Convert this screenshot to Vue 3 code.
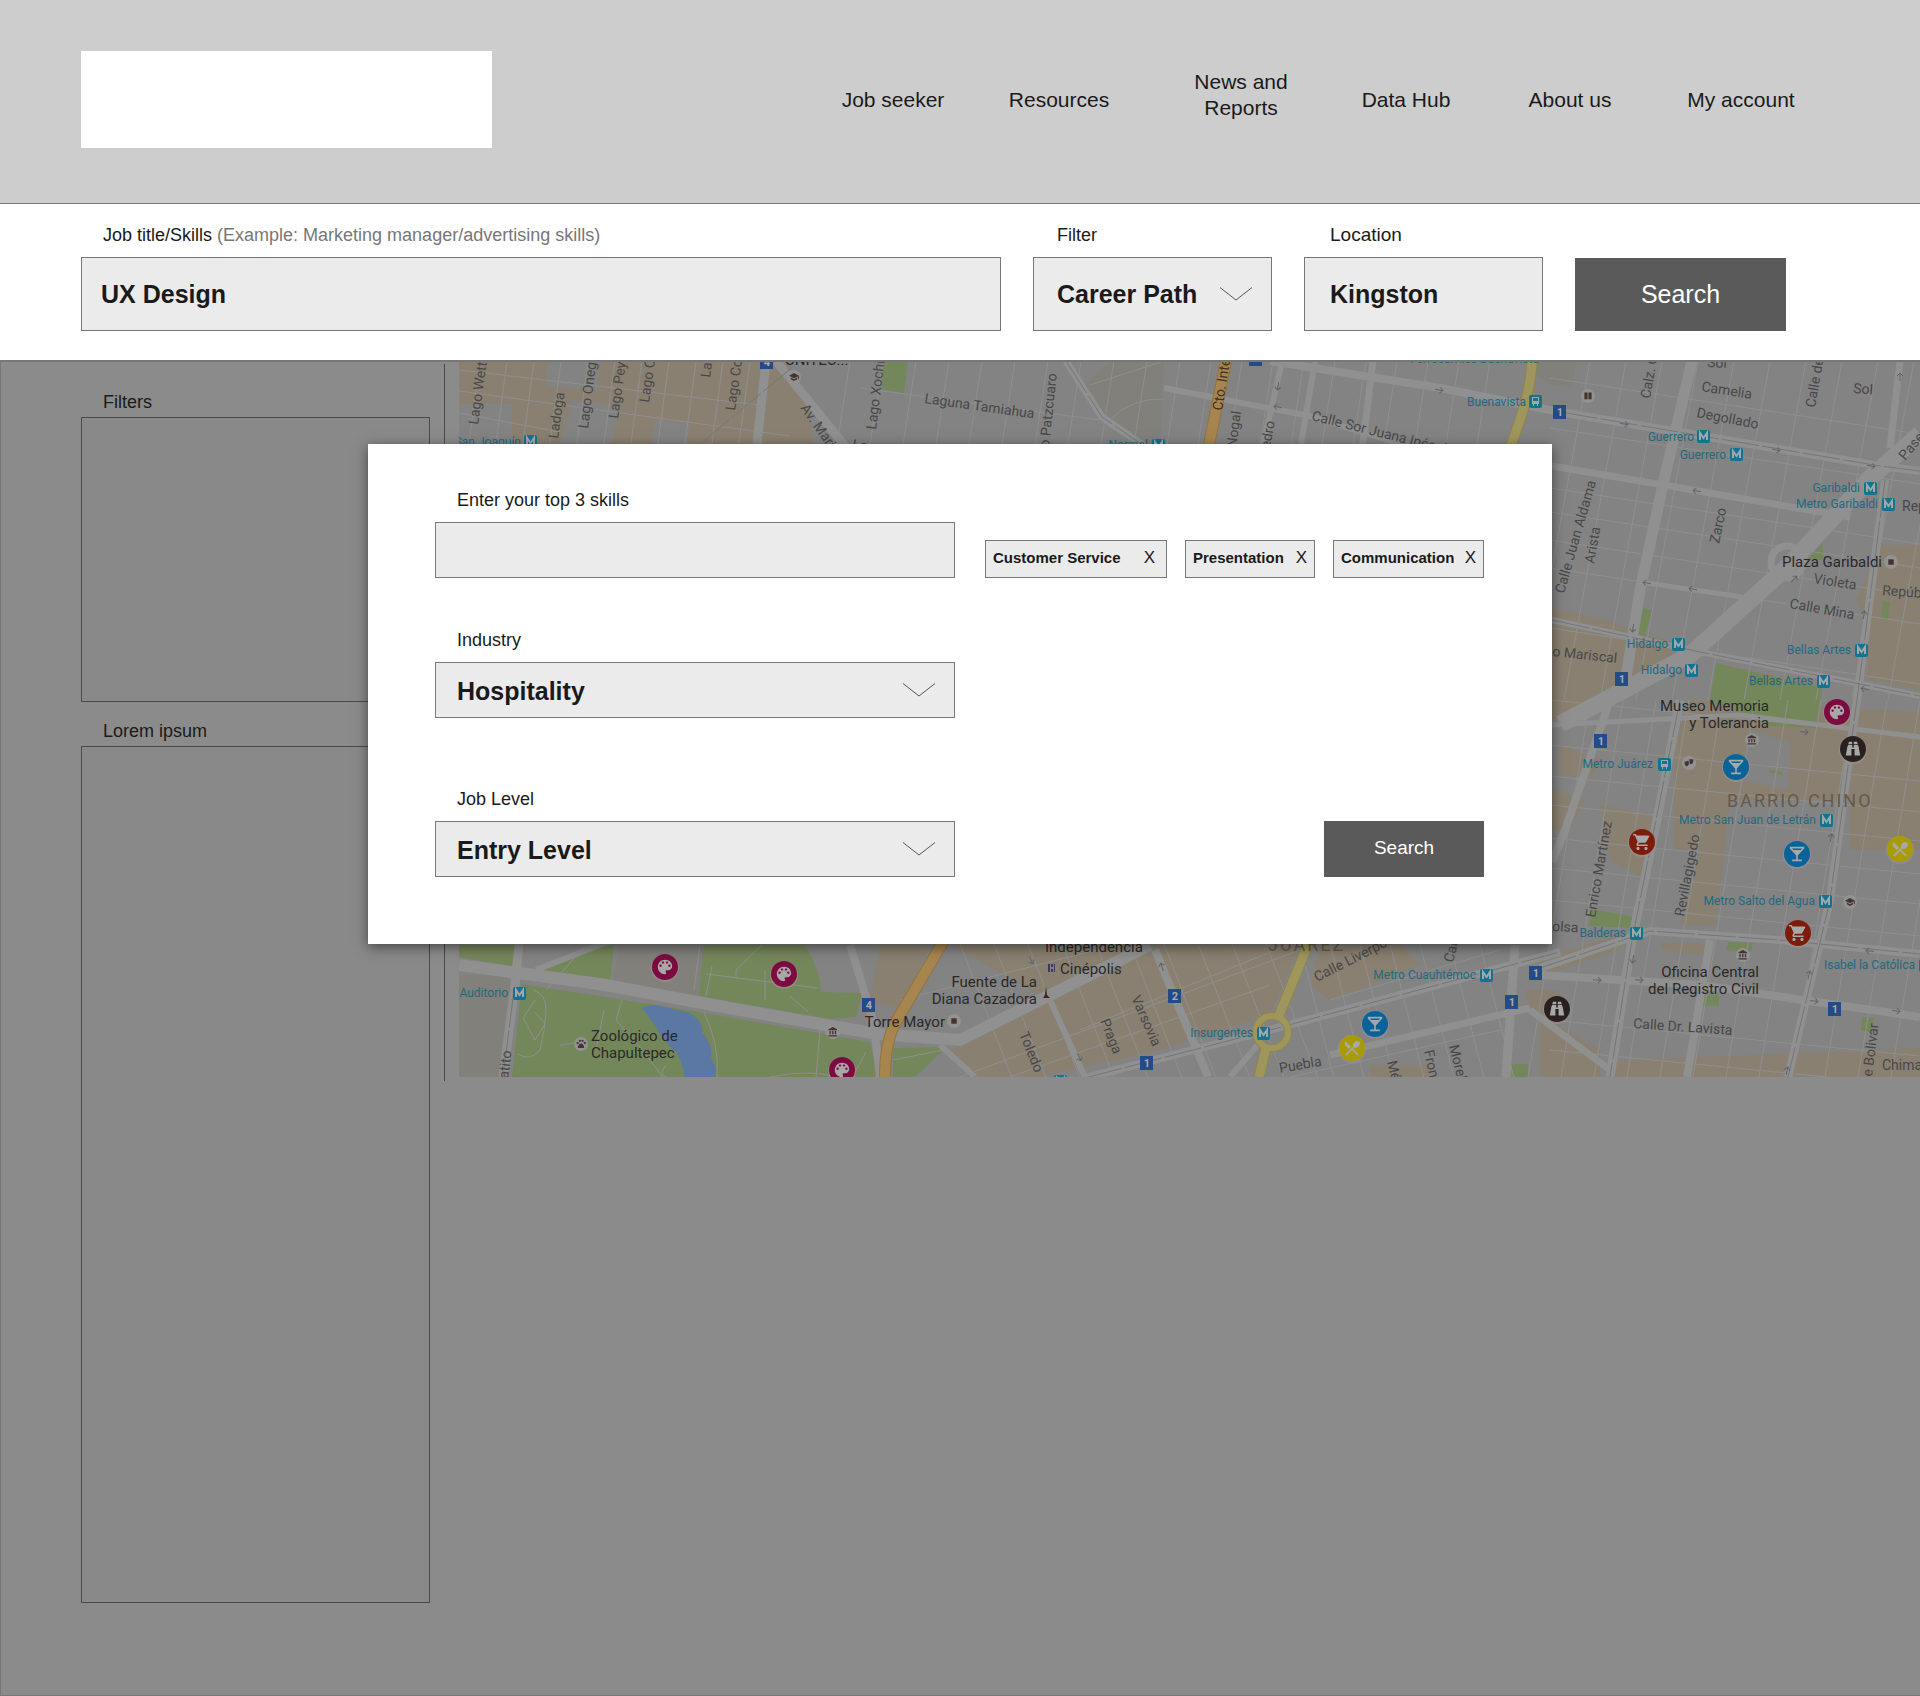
<script setup>
import { ref } from 'vue'

const jobTitle = ref('UX Design')
const location = ref('Kingston')
const newSkill = ref('')
const skills = ref(['Customer Service', 'Presentation', 'Communication'])
const navItems = ['Job seeker', 'Resources', 'News and Reports', 'Data Hub', 'About us', 'My account']

const removeSkill = (skill) => {
  skills.value = skills.value.filter((s) => s !== skill)
}

// Street lines: [points, width]
const avenues = [
  ['766,361 757,444', 9], ['776,361 850,452', 9], ['1066,361 1102,417 1150,450', 7],
  ['1164,388 1310,416 1420,450', 6], ['1282,361 1262,450', 6], ['1315,361 1300,450', 6], ['1373,361 1362,450', 7],
  ['1270,361 1440,388 1560,412 1880,466 1920,471', 8],
  ['1692,361 1664,480 1640,590 1624,690', 11], ['1552,466 1850,517', 7], ['1640,582 1742,597', 5],
  ['1900,361 1890,448', 7], ['1920,434 1870,478 1788,566 1690,655 1560,724', 17],
  ['1552,620 1700,652 1920,696', 6], ['1885,480 1857,700 1830,900 1788,1077', 8],
  ['1680,700 1655,830 1632,940 1610,1077', 9], ['1552,725 1740,715 1920,737', 5],
  ['1610,700 1565,830 1552,862', 8], ['1540,968 1650,931 1780,940 1920,954', 8],
  ['1540,975 1700,985 1920,1017', 8], ['1710,940 1687,1077', 8], ['1530,1010 1610,1070', 7],
  ['459,965 600,984 740,1010 878,1034 960,1040 1040,1000 1150,945', 12],
  ['519,944 515,985 503,1077', 9], ['536,970 612,940', 6],
  ['1085,1078 1270,1030 1560,952', 8], ['1330,1055 1512,1012 1530,1008', 7],
  ['1515,945 1506,1077', 9], ['1050,1000 1085,1077', 6], ['1155,950 1208,1077', 8], ['875,1035 880,1077', 8],
  ['850,945 870,1010 878,1040', 8], ['1230,1077 1262,1040', 6], ['940,1045 975,1077', 6]
]

const range = (from, to, step) => {
  const out = []
  for (let v = from; v < to; v += step) out.push(v)
  return out
}

const minorStreets = [
  ...range(480, 760, 27).map((x) => `M${x} 361l-12 90`),
  ...range(850, 1160, 33).map((x) => `M${x} 361l-14 90`),
  ...range(1180, 1520, 31).map((x) => `M${x} 361l-14 90`),
  'M459 370L760 405', 'M459 391L790 436', 'M459 413L560 432', 'M860 388L1100 420', 'M1090 385L1164 361', 'M1110 420Q1130 398 1164 399',
  ...range(1590, 1960, 36).map((x) => `M${x} 361L${x - 62} 700`),
  ...[378, 428, 488, 512, 540, 568, 628].map((y) => `M1550 ${y}L1920 ${y + 56}`),
  ...range(1590, 1960, 33).map((x) => `M${x} 700L${x - 62} 1077`),
  ...[700, 745, 776, 805, 838, 868, 900, 1020, 1050].map((y) => `M1550 ${y}L1920 ${y + 36}`),
  ...range(960, 1270, 34).map((x) => `M${x} 944l52 134`),
  ...range(1300, 1500, 30).map((x) => `M${x} 944l34 134`),
  'M900 1000L1120 944', 'M960 1077L1300 950', 'M1010 1077L1270 985', 'M1080 1030L1290 944', 'M1290 1077L1500 1030', 'M1330 1000L1500 950'
].join('')

const parkPaths =
  'M533 990q14 4 13 22t-6 38q-10 12-22 4M535 1000l-12 18 12 22 10-16-10-12M622 1000l-6 20q36 40 46 57M700 945l-6 45M712 966l-6 30M706 974l112 14M762 945l-26 25v8M765 970v30M790 996l18 16M704 1012q16 34 13 65M866 1052l-14 26M820 1030l-4 48M560 1045l14-2M596 1050l8-40M546 990l40-45M893 1060l50-10M770 1077q40-8 66 0M666 1065q-8 10 0 12'

const metro = [
  ['San Joaquín', 521, 446, 530, 441], ['Normal', 1148, 449, 1158, 445], ['Buenavista', 1526, 406, 1535, 401, 'bus'],
  ['Guerrero', 1694, 441, 1703, 436], ['Guerrero', 1726, 459, 1736, 454], ['Garibaldi', 1860, 492, 1870, 488],
  ['Metro Garibaldi', 1878, 508, 1888, 504], ['Hidalgo', 1668, 648, 1678, 644], ['Hidalgo', 1682, 674, 1691, 670],
  ['Bellas Artes', 1851, 654, 1861, 650], ['Bellas Artes', 1813, 685, 1823, 681], ['Metro Juárez', 1653, 768, 1664, 764, 'bus'],
  ['Metro San Juan de Letrán', 1816, 824, 1826, 820], ['Metro Salto del Agua', 1815, 905, 1825, 901],
  ['Balderas', 1626, 937, 1636, 933], ['Isabel la Católica', 1915, 969, 1925, 965], ['Auditorio', 508, 997, 519, 993],
  ['Insurgentes', 1253, 1037, 1263, 1033], ['Metro Cuauhtémoc', 1476, 979, 1486, 975], ['', 0, 0, 1060, 1081]
]

// Street names: [text, x, y, rotation]
const streets = [
  ['Lago Wettener', 478, 425, -82], ['Ladoga', 558, 439, -82], ['Lago Onega', 588, 429, -83], ['Lago Peypus', 618, 419, -82],
  ['Lago Chalco', 649, 403, -82], ['Lago', 710, 378, -82], ['Lago Como', 735, 411, -82], ['Lago Xochimilco', 876, 430, -83],
  ['Av. Marina', 800, 408, 55], ['Lago', 852, 449, 8], ['Laguna Tamiahua', 924, 403, 8], ['o Patzcuaro', 1049, 448, -84],
  ['Nogal', 1236, 448, -82], ['edro', 1270, 449, -80], ['Calle Sor Juana Inés de la', 1311, 420, 14], ['Calz. Guerrero', 1650, 399, -80],
  ['Sol', 1707, 367, 3], ['Camelia', 1701, 391, 9], ['Calle de', 1815, 408, -80], ['Sol', 1853, 393, 4], ['Degollado', 1696, 417, 11],
  ['Rep', 1902, 511, 0], ['Paseo', 1905, 461, -50], ['Zarco', 1719, 544, -78], ['Calle Juan Aldama', 1564, 594, -74],
  ['Arista', 1594, 564, -80], ['Violeta', 1813, 583, 9], ['Repúb', 1882, 595, 4], ['Calle Mina', 1789, 608, 10],
  ['o Mariscal', 1552, 656, 6], ['Enrico Martínez', 1595, 918, -80], ['Revillagigedo', 1684, 917, -79], ['olsa', 1552, 931, 3],
  ['Calle Dr. Lavista', 1633, 1028, 4], ['e Bolivar', 1872, 1077, -83], ['Chima', 1882, 1070, 0], ['atito', 508, 1079, -83],
  ['Toledo', 1019, 1034, 68], ['Praga', 1100, 1021, 68], ['Varsovia', 1131, 998, 66], ['Calle Liverpool', 1317, 982, -27],
  ['Calle', 1453, 963, -76], ['Puebla', 1280, 1073, -10], ['Mérida', 1387, 1062, 76], ['Frontera', 1424, 1051, 78], ['Morelia', 1449, 1046, 76]
]

// Landmarks: [text, x, y, anchor]
const places = [
  ['UNITEC...', 785, 365, 'start'], ['Plaza Garibaldi', 1882, 567, 'end'], ['Museo Memoria', 1769, 711, 'end'],
  ['y Tolerancia', 1769, 728, 'end'], ['Oficina Central', 1759, 977, 'end'], ['del Registro Civil', 1759, 994, 'end'],
  ['Torre Mayor', 945, 1027, 'end'], ['Fuente de La', 1037, 987, 'end'], ['Diana Cazadora', 1037, 1004, 'end'],
  ['Zoológico de', 591, 1041, 'start'], ['Chapultepec', 591, 1058, 'start'], ['Independencia', 1045, 952, 'start'],
  ['Cinépolis', 1060, 974, 'start']
]

const shields = [
  ['4', 767, 362], ['', 1256, 359], ['1', 1560, 412], ['1', 1622, 679], ['1', 1601, 741], ['1', 1835, 1009],
  ['1', 1536, 973], ['1', 1512, 1002], ['2', 1175, 996], ['1', 1147, 1063], ['4', 869, 1005]
]

const glyphs = {
  palette: 'M12 3c-4.97 0-9 4.03-9 9s4.03 9 9 9c.83 0 1.5-.67 1.5-1.5 0-.39-.15-.74-.39-1.01-.23-.26-.38-.61-.38-.99 0-.83.67-1.5 1.5-1.5H16c2.76 0 5-2.24 5-5 0-4.42-4.03-8-9-8zm-5.5 9c-.83 0-1.5-.67-1.5-1.5S5.67 9 6.5 9 8 9.67 8 10.5 7.33 12 6.5 12zm3-4C8.67 8 8 7.33 8 6.5S8.67 5 9.5 5s1.5.67 1.5 1.5S10.33 8 9.5 8zm5 0c-.83 0-1.5-.67-1.5-1.5S13.67 5 14.5 5s1.5.67 1.5 1.5S15.33 8 14.5 8zm3 4c-.83 0-1.5-.67-1.5-1.5S16.67 9 17.5 9s1.5.67 1.5 1.5-.67 1.5-1.5 1.5z',
  bar: 'M21 5V3H3v2l8 9v5H6v2h12v-2h-5v-5l8-9zM7.43 7L5.66 5h12.69l-1.78 2H7.43z',
  cart: 'M7 18c-1.1 0-1.99.9-1.99 2S5.9 22 7 22s2-.9 2-2-.9-2-2-2zM1 2v2h2l3.6 7.59-1.35 2.45c-.16.28-.25.61-.25.96 0 1.1.9 2 2 2h12v-2H7.42c-.14 0-.25-.11-.25-.25l.03-.12.9-1.63h7.45c.75 0 1.41-.41 1.75-1.03l3.58-6.49A1.003 1.003 0 0 0 20 4H5.21l-.94-2H1zm16 16c-1.1 0-1.99.9-1.99 2s.89 2 1.99 2 2-.9 2-2-.9-2-2-2z',
  food: 'M8.1 13.34l2.83-2.83L3.91 3.5c-1.56 1.56-1.56 4.09 0 5.66l4.19 4.18zm6.78-1.81c1.53.71 3.68.21 5.27-1.38 1.91-1.91 2.28-4.65.81-6.12-1.46-1.46-4.2-1.1-6.12.81-1.59 1.59-2.09 3.74-1.38 5.27L3.7 19.87l1.41 1.41L12 14.41l6.88 6.88 1.41-1.41L13.41 13l1.47-1.47z',
  view: 'M3 20h7v-8h4v8h7L19 9l-1-2h-5v3h-2V7H6L5 9zM7 3h4v3H6zM13 3h4l1 3h-5z',
  museum: 'M4 10v7h3v-7H4zm6 0v7h3v-7h-3zM2 22h19v-3H2v3zm14-12v7h3v-7h-3zm-4.5-9L2 6v2h19V6l-9.5-5z',
  school: 'M5 13.18v4L12 21l7-3.82v-4L12 17l-7-3.82zM12 3L1 9l11 6 9-4.91V17h2V9L12 3z',
  paw: 'M2 10a2.5 2.5 0 1 0 5 0a2.5 2.5 0 1 0-5 0M7 5a2.5 2.5 0 1 0 5 0a2.5 2.5 0 1 0-5 0M13 5a2.5 2.5 0 1 0 5 0a2.5 2.5 0 1 0-5 0M18 10a2.5 2.5 0 1 0 5 0a2.5 2.5 0 1 0-5 0M12 11c-3 0-7 5-7 8s4 2 7 2 7 1 7-2-4-8-7-8z',
  book: 'M4 4h7v15H4zM13 4h7v15h-7z',
  square: 'M6 6h12v12H6z',
  masks: 'M2 9l9-2 1 8-5 5-4-3zM13 3l9 1-2 9-5 2-2-4z'
}

const pins = [
  ['palette', 1837, 712], ['palette', 665, 967], ['palette', 784, 974], ['palette', 842, 1070],
  ['bar', 1736, 767], ['bar', 1797, 854], ['bar', 1375, 1024], ['cart', 1642, 842], ['cart', 1798, 933],
  ['food', 1900, 849], ['food', 1352, 1048], ['view', 1853, 749], ['view', 1557, 1009]
]

const pois = [
  ['school', 794, 377], ['book', 1588, 396], ['square', 1891, 562], ['museum', 1752, 740], ['masks', 1689, 763],
  ['school', 1850, 902], ['museum', 1743, 955], ['square', 954, 1021], ['museum', 833, 1032], ['paw', 581, 1044]
]

// One-way arrows: [x, y, rotation]
const arrows = [
  [1278, 386, 100], [1278, 407, 190], [1439, 390, 10], [1624, 424, 10], [1776, 450, 10], [1871, 466, 10], [1697, 491, 190],
  [1647, 583, 190], [1693, 589, 190], [1633, 628, 100], [1794, 579, -45], [1864, 615, -80], [1865, 689, 190], [1900, 377, -90],
  [1804, 732, 8], [1831, 838, -80], [1633, 959, 100], [1597, 980, 3], [1639, 980, 3], [1870, 951, 185], [1809, 975, -75],
  [1814, 1001, 8], [1896, 1011, 8], [1787, 1071, -80], [1031, 960, 65], [1162, 967, -110], [1079, 1057, 65]
]
</script>

<template>
  <div class="page">
    <header class="header">
      <a class="logo" href="#" aria-label="Home"></a>
      <nav class="nav">
        <a v-for="item in navItems" :key="item" href="#"><span>{{ item }}</span></a>
      </nav>
    </header>

    <form class="search-bar" @submit.prevent>
      <div class="field field-title">
        <label for="title">Job title/Skills <span class="hint">(Example: Marketing manager/advertising skills)</span></label>
        <input id="title" v-model="jobTitle" class="control" type="text" />
      </div>
      <div class="field field-filter">
        <label for="filter">Filter</label>
        <div class="select">
          <select id="filter" class="control"><option>Career Path</option></select>
          <svg class="chevron" viewBox="0 0 32 14" aria-hidden="true"><path d="M0 0.5L16 13L32 0.5" /></svg>
        </div>
      </div>
      <div class="field field-location">
        <label for="location">Location</label>
        <input id="location" v-model="location" class="control" type="text" />
      </div>
      <button class="search-button" type="submit">Search</button>
    </form>

    <main class="main">
      <aside class="sidebar">
        <h2>Filters</h2>
        <div class="panel panel-filters"></div>
        <h2>Lorem ipsum</h2>
        <div class="panel panel-list"></div>
      </aside>

      <section class="map">
        <svg viewBox="459 362 1461 715" preserveAspectRatio="xMinYMin slice" role="img" aria-label="Map of job locations">
          <rect class="land" x="459" y="361" width="1461" height="716" />
          <g class="blocks">
            <path d="M459 361H786L808 400L814 450H512V404H459z" />
            <path d="M1552 608L1606 620L1640 633L1690 646L1672 662L1622 690L1552 720z" />
            <path d="M1880 545H1920V690L1868 680V630L1856 600z" />
            <path d="M1690 700L1920 712V850H1850V800H1730L1716 925H1680L1700 850H1674V740z" />
            <path d="M1600 805L1660 816L1645 880L1610 860zM1552 790L1585 800L1570 830H1552zM1560 745L1600 760L1590 780L1560 775z" />
            <path d="M1552 955L1620 935V950L1552 972zM1540 1015L1600 1050V1077H1540zM1620 1060L1830 1052L1920 1048V1077H1610zM1660 942L1712 944L1708 956L1662 950z" />
            <path d="M880 945H930L900 1010L870 1000zM950 945H1300L1270 1015L1160 1050L1040 1077H975L950 1050L1050 1000z" />
            <path d="M1320 945H1400L1420 965L1330 1000L1310 985zM1525 990H1560V1030L1530 1010zM1370 1077V1065H1430V1077z" />
          </g>
          <path class="civic" d="M1110 361H1164L1160 450L1140 446L1105 415L1085 385zM1534 361H1576L1572 388L1550 384L1536 376zM459 975H512L500 1077H459zM620 945H705L700 997L612 982z" />
          <path class="patch" d="M547 361H600L597 390L547 386zM572 400L620 406L612 444H560zM655 420L690 424L686 450H650zM1730 840L1790 845L1780 900L1735 890zM1750 730L1790 742L1788 790L1740 780zM1655 875L1680 880L1670 930L1650 925zM1870 860L1920 866V890L1872 888z" />
          <g class="park">
            <path d="M884 361H908L904 393L882 389z" />
            <path d="M1823 543V560L1808 559zM1641 608L1652 610L1645 636L1636 633zM1716 663L1822 688L1816 728L1770 726L1710 700zM1770 770L1783 772L1781 775L1769 772zM1592 909L1634 917L1632 928L1589 926zM1728 942L1753 943L1751 952L1726 950zM1703 995H1719V1006H1702zM1862 1017L1874 1018L1872 1032L1861 1031zM1883 600L1890 602L1888 620L1881 618z" />
            <path d="M459 945H517L516 967L459 957zM535 970L585 948L614 945L610 982zM704 945H805Q820 968 821 992L862 993L856 1017L830 1019L699 996z" />
            <path d="M522 984L700 1012L870 1042L878 1077H512zM893 1048L947 1047L915 1077H893z" />
            <rect x="1512" y="1064" width="16" height="13" />
          </g>
          <path class="minor" :d="minorStreets" />
          <path class="park" d="M530 992L690 1016L640 1077H516zM720 1022L866 1044L872 1077H722z" />
          <path class="lake" d="M642 1008Q650 1003 660 1006L690 1013Q704 1022 702 1033Q713 1044 711 1058Q717 1066 716 1077H684Q684 1064 676 1052Q662 1040 655 1025z" />
          <path class="minor" :d="parkPaths" />
          <polyline v-for="[points, width] in avenues" :key="points" class="avenue" :points="points" :stroke-width="width" />
          <circle class="avenue" cx="1787" cy="562" r="16" stroke-width="7" />
          <path class="rail" d="M1560 412L1880 466L1920 471M1552 620L1700 652L1920 696M1885 480L1857 700L1830 900L1788 1077M1680 700L1632 940L1610 1077M1540 968L1650 931L1780 940L1920 954M1085 1078L1270 1030L1560 952M514 990L503 1077M700 444L800 361M1066 361L1102 417L1150 450" />
          <g class="orange">
            <path class="edge" d="M1226 361L1208 450M943 942L897 1020Q885 1040 885 1077" />
            <path class="core" d="M1226 361L1208 450M943 942L897 1020Q885 1040 885 1077" />
          </g>
          <g class="yellow">
            <path class="edge" d="M1532 361Q1531 395 1509 450M1309 942L1278 1018M1266 1048L1259 1077" />
            <circle class="edge circus" cx="1272" cy="1032" r="16" />
            <path class="core" d="M1532 361Q1531 395 1509 450M1309 942L1278 1018M1266 1048L1259 1077" />
            <circle class="core circus" cx="1272" cy="1032" r="16" />
          </g>
          <path v-for="[x, y, r] in arrows" :key="`${x}-${y}`" class="arrow" d="M-4 0H4M1 -3L4 0L1 3" :transform="`translate(${x} ${y}) rotate(${r})`" />

          <text v-for="[name, x, y, r] in streets" :key="`${name}${x}`" class="street" :transform="`translate(${x} ${y}) rotate(${r})`">{{ name }}</text>
          <text class="street ring" transform="translate(1222 411) rotate(-81)">Cto. Interior</text>
          <text class="transit" x="1410" y="363">Ferrocarriles Buenavista</text>
          <text class="district" x="1727" y="807">BARRIO CHINO</text>
          <text class="district" x="1268" y="951">JUÁREZ</text>

          <g v-for="[name, tx, ty, x, y, kind] in metro" :key="`${name}${x}`">
            <text class="transit" :x="tx" :y="ty" text-anchor="end">{{ name }}</text>
            <rect class="stop" :x="x - 6" :y="y - 6" width="13" height="13" rx="2" />
            <path v-if="kind === 'bus'" class="bus" :transform="`translate(${x} ${y})`" d="M-3 -4H4V3H3V5H2V3H-1V5H-2V3H-3zM-2 -3V0H3V-3z" />
            <path v-else class="stop-mark" :transform="`translate(${x} ${y})`" d="M-3 4V-3L0.5 2L4 -3V4" />
          </g>
          <g v-for="[label, x, y] in shields" :key="`${x}-${y}`">
            <rect class="shield" :x="x - 7" :y="y - 7" width="13" height="14" />
            <text class="shield-label" :x="x" :y="y + 4" text-anchor="middle">{{ label }}</text>
          </g>
          <g v-for="[icon, x, y] in pois" :key="`${x}-${y}`" class="poi" :transform="`translate(${x} ${y})`">
            <circle r="7" />
            <path :d="glyphs[icon]" transform="scale(0.45) translate(-12 -12)" />
          </g>
          <path class="cinema" d="M1048 964h2v8h-2zM1051 964h2v3h-2zM1051 969h2v3h-2zM1054 964h1v8h-1z" />
          <path class="statue" d="M1046 986l1 9 3 3h-7l2-3z" />
          <text v-for="[name, x, y, anchor] in places" :key="name" class="place" :x="x" :y="y" :text-anchor="anchor">{{ name }}</text>

          <g v-for="[icon, x, y] in pins" :key="`${x}-${y}`" :class="['pin', icon]" :transform="`translate(${x} ${y})`">
            <circle class="pin-shadow" cy="1" r="14" />
            <circle class="disc" r="13" />
            <path :d="glyphs[icon]" transform="scale(0.8) translate(-12 -12)" />
          </g>
        </svg>
      </section>
    </main>

    <form class="dialog" role="dialog" aria-label="Refine search" @submit.prevent>
      <div class="fields">
        <div class="field">
          <label for="skill">Enter your top 3 skills</label>
          <input id="skill" v-model="newSkill" class="control" type="text" />
        </div>
        <div class="field">
          <label for="industry">Industry</label>
          <div class="select">
            <select id="industry" class="control"><option>Hospitality</option></select>
            <svg class="chevron" viewBox="0 0 32 14" aria-hidden="true"><path d="M0 0.5L16 13L32 0.5" /></svg>
          </div>
        </div>
        <div class="field field-level">
          <label for="level">Job Level</label>
          <div class="select">
            <select id="level" class="control"><option>Entry Level</option></select>
            <svg class="chevron" viewBox="0 0 32 14" aria-hidden="true"><path d="M0 0.5L16 13L32 0.5" /></svg>
          </div>
        </div>
      </div>
      <div class="side">
        <ul class="tags">
          <li v-for="skill in skills" :key="skill">
            <span>{{ skill }}</span>
            <button type="button" :aria-label="`Remove ${skill}`" @click="removeSkill(skill)">X</button>
          </li>
        </ul>
        <button class="search-button small" type="submit">Search</button>
      </div>
    </form>
  </div>
</template>

<style>
body {
  margin: 0;
}
</style>

<style scoped>
.page {
  position: relative;
  font-family: 'Liberation Sans', Arial, sans-serif;
  font-size: 18px;
  line-height: 20px;
  color: #1a1a1a;
  background: #8b8b8b;
}
.page *,
.page {
  box-sizing: border-box;
}
input,
select,
button {
  font: inherit;
  color: inherit;
  margin: 0;
  border-radius: 0;
}

.header {
  display: flex;
  align-items: center;
  height: 204px;
  padding: 0 103px 4px 81px;
  background: #cdcdcd;
  border-bottom: 1px solid #777;
}
.logo {
  flex: none;
  width: 411px;
  height: 97px;
  background: #fff;
}
.nav {
  flex: 1;
  display: grid;
  grid-template-columns: 160fr 172fr 192fr 138fr 190fr 152fr;
  align-items: center;
  margin-left: 321px;
  font-size: 21px;
  line-height: 26px;
  text-align: center;
}
.nav a {
  display: flex;
  justify-content: center;
  color: inherit;
  text-decoration: none;
}
.nav span {
  max-width: 120px;
}
.nav a:nth-child(3) {
  padding-bottom: 10px;
}

.search-bar {
  display: flex;
  align-items: flex-end;
  height: 158px;
  padding: 0 134px 29px 81px;
  background: #fff;
  border-bottom: 2px solid #777;
}
.field {
  display: flex;
  flex-direction: column;
}
.field label {
  padding-left: 22px;
}
.hint {
  color: #777;
}
.control {
  width: 100%;
  height: 56px;
  padding: 2px 21px 0;
  border: 1px solid #777;
  background: #ebebeb;
  font-size: 25px;
  font-weight: 700;
  line-height: 30px;
  appearance: none;
}
.search-bar .field {
  gap: 12px;
}
.search-bar .control {
  height: 74px;
  padding-top: 0;
}
.search-bar .field-title {
  flex: 1;
  margin-right: 32px;
}
.search-bar .field-title .control {
  padding-left: 19px;
}
.field-filter,
.field-location {
  width: 239px;
  margin-right: 32px;
}
.field-location label {
  padding-left: 26px;
  font-size: 19px;
}
.field-filter label {
  padding-left: 24px;
}
.search-bar .field-filter .control {
  padding: 0 0 0 23px;
}
.search-bar .field-location .control {
  padding: 0 0 0 25px;
}
.select {
  display: grid;
  align-items: center;
}
.select > * {
  grid-area: 1 / 1;
}
.chevron {
  justify-self: end;
  width: 32px;
  height: 14px;
  margin-right: 20px;
  fill: none;
  stroke: #555;
  stroke-width: 1;
  pointer-events: none;
}
.search-button {
  width: 211px;
  height: 73px;
  padding: 0 0 2px;
  border: 0;
  background: #5a5a5a;
  color: #fff;
  font-size: 25px;
}

.main {
  display: flex;
  align-items: flex-start;
  min-height: 1334px;
  border: solid #777;
  border-width: 0 0 1px 1px;
}
.sidebar {
  flex: none;
  width: 349px;
  margin-left: 80px;
  padding-top: 30px;
}
.sidebar h2 {
  margin: 0;
  padding: 0 0 5px 22px;
  font-size: 18px;
  font-weight: 400;
}
.panel {
  border: 1px solid #4a4a4a;
  background: #898989;
}
.panel-filters {
  height: 285px;
  margin-bottom: 19px;
}
.panel-list {
  height: 857px;
}
.map {
  flex: 1;
  min-width: 0;
  height: 717px;
  margin: 2px 0 0 14px;
  padding-left: 14px;
  border-left: 1px solid #4a4a4a;
}
.map svg {
  display: block;
  width: 100%;
  height: 715px;
  margin-top: -2px;
  font-family: Roboto, sans-serif;
}
.land { fill: #838384; }
.blocks { fill: #8a8071; }
.civic { fill: #81807b; }
.patch { fill: #838384; }
.park { fill: #74875a; }
.lake { fill: #5b77a3; }
.minor { fill: none; stroke: #8f8f8f; stroke-width: 1; }
.avenue { fill: none; stroke: #909090; stroke-linejoin: round; }
.rail { fill: none; stroke: #747678; stroke-width: 1; stroke-dasharray: 38 3; }
.orange, .yellow { fill: none; }
.orange .edge { stroke: #927341; stroke-width: 12; }
.orange .core { stroke: #a7854e; stroke-width: 10; }
.yellow .edge { stroke: #90854b; stroke-width: 11; }
.yellow .core { stroke: #9f965d; stroke-width: 9; }
.yellow .edge.circus { stroke-width: 8; }
.yellow .core.circus { stroke-width: 6; }
.arrow { fill: none; stroke: #62646b; stroke-width: 1; }
.street { font-size: 14px; fill: #484848; }
.ring { fill: #403020; }
.transit { font-size: 12px; fill: #226980; }
.district { font-size: 18px; letter-spacing: 2px; fill: #67594a; }
.place { font-size: 15px; fill: #292929; }
.stop { fill: #137492; }
.stop-mark { fill: none; stroke: #a0a8aa; stroke-width: 2; }
.bus { fill: #a0a8aa; fill-rule: evenodd; }
.shield { fill: #234b87; }
.shield-label { font-size: 11px; font-weight: 700; fill: #aaa; }
.poi circle { fill: #929292; }
.poi path { fill: #44332f; }
.cinema { fill: #3c3769; }
.statue { fill: #44201f; }
.pin-shadow { fill: #9a9292; opacity: 0.6; }
.pin path { fill: #a8a8a8; }
.palette .disc { fill: #7e0b40; }
.bar .disc { fill: #07639a; }
.cart .disc { fill: #7d1c0b; }
.food .disc { fill: #a99b06; }
.view .disc { fill: #2b2020; }

.dialog {
  position: absolute;
  top: 444px;
  left: 50%;
  display: flex;
  justify-content: space-between;
  width: 1184px;
  height: 500px;
  padding: 46px 68px 67px 67px;
  transform: translateX(-50%);
  background: #fff;
  box-shadow: 0 3px 12px rgba(0, 0, 0, 0.5);
}
.fields {
  width: 520px;
}
.fields .field {
  gap: 12px;
  margin-bottom: 52px;
}
.fields .field-level {
  margin: 71px 0 0;
}
.side {
  display: flex;
  flex-direction: column;
  justify-content: space-between;
  align-items: flex-end;
  padding-top: 50px;
}
.tags {
  display: grid;
  grid-template-columns: 182px 130px 151px;
  gap: 18px;
  margin: 0;
  padding: 0;
  list-style: none;
}
.tags li {
  display: flex;
  align-items: center;
  justify-content: space-between;
  height: 38px;
  padding: 0 7px 2px;
  border: 1px solid #777;
  background: #ebebeb;
  font-size: 15px;
  font-weight: 700;
}
.tags li:first-child {
  padding-right: 11px;
}
.tags button {
  padding: 0;
  border: 0;
  background: none;
  font-size: 17px;
  font-weight: 400;
}
.search-button.small {
  width: 160px;
  height: 56px;
  font-size: 19px;
}
</style>
